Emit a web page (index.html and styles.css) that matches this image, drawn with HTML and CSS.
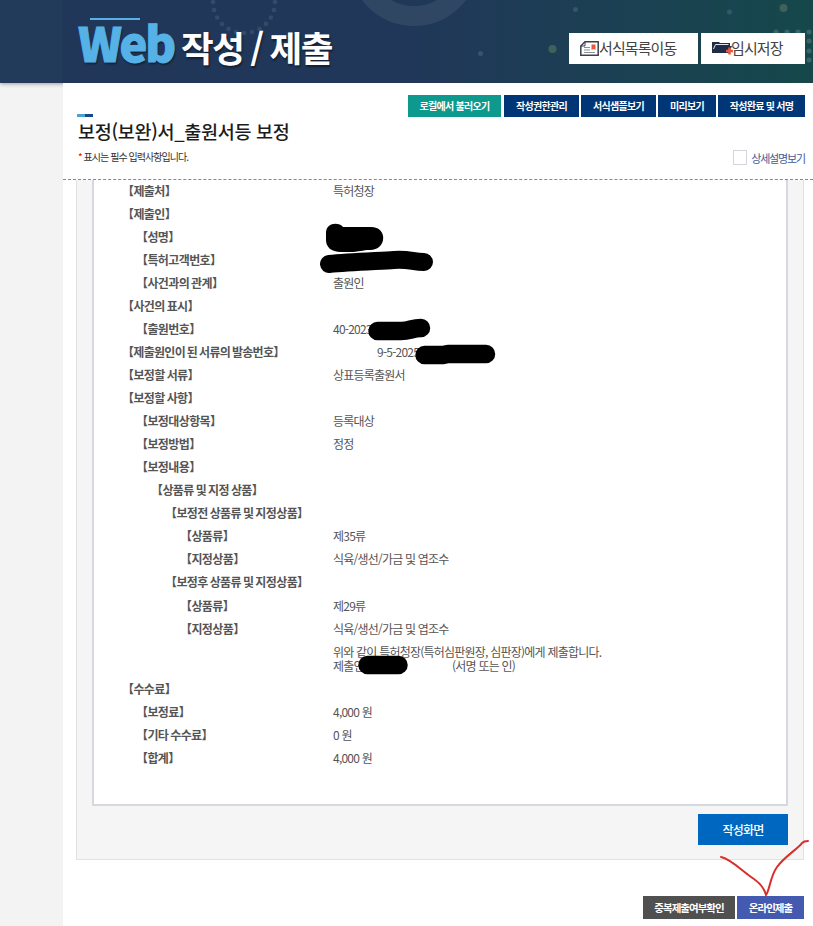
FILE: index.html
```
<!DOCTYPE html>
<html lang="ko">
	<head>
		<meta charset="utf-8">
		<title>Web 작성 / 제출</title>
		<link rel="stylesheet" href="styles.css">
	</head>
	<body>
		<header class="header">
			<svg class="header-bg" width="813" height="83" viewBox="0 0 813 83">
				<circle cx="244" cy="2" r="31" fill="none" stroke="#324b6b" stroke-width="4.6" stroke-linecap="round" stroke-dasharray="0 8.1"/>
				<circle cx="414" cy="-39" r="55" fill="none" stroke="#304763" stroke-width="20"/>
				<g fill="#31576c">
					<circle cx="575.500" cy="9.500" r="2.500"/>
					<circle cx="480.500" cy="53.500" r="2.500"/>
					<circle cx="729.500" cy="12" r="2.500"/>
				</g>
				<g fill="#3e6259">
					<circle cx="783.500" cy="8" r="4"/>
					<circle cx="552.500" cy="49" r="4"/>
				</g>
				<path d="M776 32h.1M787 32h.1M798 32h.1M809 32h.1M809 41h.1M809 51h.1M809 60h.1" stroke="#3a6468" stroke-width="5" stroke-linecap="round"/>
			</svg>
			<h1 class="logo"><span class="web">Web</span><span class="ko">작성 / 제출</span></h1>
			<div class="head-btns">
				<a class="list">
					<svg width="19" height="15" viewBox="0 0 19 15">
						<path d="M5 .8H18.200V14.200H.800V5z" fill="#fff" stroke="#3c4150" stroke-width="1.500"/>
						<path d="M.8 5H5V.8" fill="none" stroke="#3c4150"/>
						<path d="M4 6.500h6M4 9h6M4 11.500h11" stroke="#8b8f99" stroke-width="1.200"/>
						<path d="M11.500 3.500h4v5.500l-2-1-2 1z" fill="#e8593b"/>
					</svg><span>서식목록이동</span>
				</a>
				<a class="save">
					<svg width="21" height="14" viewBox="0 0 21 14">
						<path d="M0 12V1h7l1 1h10v3h2l-3 7z" fill="#1f2c47"/>
						<path d="M1.500 8l2-4.500h13" fill="none" stroke="#dfe4ec"/>
						<path d="M17.500 6.500v7M14 10h7" stroke="#e8593b" stroke-width="2.600"/>
					</svg><span>임시저장</span>
				</a>
			</div>
		</header>
		<main class="page">
			<div class="title">
				<div class="top-btns">
					<a class="load">로컬에서 불러오기</a>
					<a class="auth">작성권한관리</a>
					<a class="sample">서식샘플보기</a>
					<a class="preview">미리보기</a>
					<a class="sign">작성완료 및 서명</a>
				</div>
				<h2>보정(보완)서_출원서등 보정</h2>
				<div class="guide">
					<p><em>*</em> 표시는 필수 입력사항입니다.</p>
					<label><i></i>상세설명보기</label>
				</div>
			</div>
			<div class="panel">
				<dl class="doc">
					<div class="row"><dt>【제출처】</dt><dd>특허청장</dd></div>
					<div class="row"><dt>【제출인】</dt></div>
					<div class="row d1"><dt>【성명】</dt></div>
					<div class="row d1"><dt>【특허고객번호】</dt></div>
					<div class="row d1"><dt>【사건과의 관계】</dt><dd>출원인</dd></div>
					<div class="row"><dt>【사건의 표시】</dt></div>
					<div class="row d1"><dt>【출원번호】</dt><dd>40-2023</dd></div>
					<div class="row wide"><dt>【제출원인이 된 서류의 발송번호】</dt><dd>9-5-2025</dd></div>
					<div class="row"><dt>【보정할 서류】</dt><dd>상표등록출원서</dd></div>
					<div class="row"><dt>【보정할 사항】</dt></div>
					<div class="row d1"><dt>【보정대상항목】</dt><dd>등록대상</dd></div>
					<div class="row d1"><dt>【보정방법】</dt><dd>정정</dd></div>
					<div class="row d1"><dt>【보정내용】</dt></div>
					<div class="row d2"><dt>【상품류 및 지정 상품】</dt></div>
					<div class="row d3"><dt>【보정전 상품류 및 지정상품】</dt></div>
					<div class="row d4"><dt>【상품류】</dt><dd>제35류</dd></div>
					<div class="row d4"><dt>【지정상품】</dt><dd>식육/생선/가금 및 엽조수</dd></div>
					<div class="row d3 last"><dt>【보정후 상품류 및 지정상품】</dt></div>
					<div class="row d4"><dt>【상품류】</dt><dd>제29류</dd></div>
					<div class="row d4"><dt>【지정상품】</dt><dd>식육/생선/가금 및 엽조수</dd></div>
					<div class="row submit"><dt></dt><dd><p>위와 같이 특허청장(특허심판원장, 심판장)에게 제출합니다.</p><p class="name"><span>제출인</span><span>(서명 또는 인)</span></p></dd></div>
					<div class="row"><dt>【수수료】</dt></div>
					<div class="row d1"><dt>【보정료】</dt><dd>4,000 원</dd></div>
					<div class="row d1"><dt>【기타 수수료】</dt><dd>0 원</dd></div>
					<div class="row d1"><dt>【합계】</dt><dd>4,000 원</dd></div>
				</dl>
				<a class="write">작성화면</a>
			</div>
			<div class="bottom-btns">
				<a class="dup">중복제출여부확인</a>
				<a class="online">온라인제출</a>
			</div>
		</main>
		<!-- 가림 표시와 체크 표시 -->
		<svg class="marks" width="813" height="926" viewBox="0 0 813 926">
			<path d="M326 233C326 222 339 222 343 227H371C388 227 387 250 370 250C362 250 360 252 349 252H341C331 252 326 247 326 240Z"/>
			<g fill="none" stroke="#000" stroke-linecap="round" stroke-linejoin="round">
				<path d="M329 264C350 262 379 261 394 260S413 262 424 262" stroke-width="18"/>
				<path d="M377.500 331H401C410 331 412 328 421 328" stroke-width="18.500"/>
				<path d="M424.500 355H443L448 354H486" stroke-width="18.500"/>
				<path d="M367.500 665H398.500" stroke-width="18.500"/>
			</g>
			<path d="M721 857C731 859 742 871 754 879C761 884 765 891 766 895C770 889 770 877 777 867C785 856 799 848 802 843Q804 841 808 841" fill="none" stroke="#d72f2c" stroke-width="2" stroke-linecap="round"/>
		</svg>
	</body>
</html>
```
FILE: styles.css
```
*{margin: 0;padding: 0;box-sizing: border-box;}
body{
	height: 926px;
	overflow: hidden;
	background: #f3f3f3;
	color: #555;
	font-family: "Noto Sans CJK KR","Noto Sans",sans-serif;
	font-size: 12px;
	white-space: nowrap;
}
em,i{font-style: normal;}
a{display: flex;align-items: center;justify-content: center;}
.header{
	position: relative;
	height: 83px;
	padding: 0 8px 0 78px;
	display: flex;
	justify-content: space-between;
	background: linear-gradient(90deg,#223b5b 0,#223b5b 62px,#203759 63px,#203759 400px,#1d3e54 570px,#15484b 813px);
	box-shadow: 0 1px 4px rgba(0,0,0,.35);
}
.header-bg{
	position: absolute;
	left: 0;
	top: 0;
}
.logo{
	position: relative;
	display: flex;
	align-items: baseline;
	height: 83px;
	line-height: 83px;
	text-shadow: 1px 2px 2px rgba(0,0,0,.45);
}
.logo:before{
	content: "";
	position: absolute;
	left: 12px;
	top: 18px;
	width: 50px;
	height: 2px;
	background: #56b2e6;
}
.logo .web{
	color: #56b2e6;
	font-size: 47px;
	font-weight: 900;
	letter-spacing: -2.4px;
	-webkit-text-stroke: 1px #56b2e6;
	width: 103px;
}
.logo .ko{
	color: #fff;
	font-size: 35.5px;
	font-weight: 700;
	letter-spacing: -1.5px;
	word-spacing: -1.5px;
}
.head-btns{
	position: relative;
	display: flex;
	gap: 3px;
	padding-top: 33px;
}
.head-btns a{
	height: 31px;
	line-height: 20px;
	padding: 0 0 1px 11px;
	justify-content: flex-start;
	background: #fff;
	color: #444;
	font-size: 15px;
	letter-spacing: -.9px;
}
.head-btns .list{width: 129px;}
.head-btns .save{width: 104px;}
.head-btns .save span{margin-left: -2px;}
.page{
	position: relative;
	margin-left: 63px;
	height: 843px;
	background: #fff;
}
.title{
	height: 97px;
	padding: 12px 8px 0 15px;
	border-bottom: 1px dashed #888;
}
.top-btns{
	display: flex;
	gap: 2px;
	justify-content: flex-end;
}
.top-btns a{
	height: 22px;
	padding-bottom: 1px;
	background: #003675;
	color: #fff;
	font-size: 10px;
	font-weight: 700;
	letter-spacing: -.7px;
}
.top-btns .load{width: 93px;margin-right: 1px;background: #0e998f;}
.top-btns .auth,.top-btns .sample{width: 75px;}
.top-btns .preview{width: 58px;}
.top-btns .sign{width: 87px;}
.title h2{
	position: relative;
	height: 30px;
	line-height: 29px;
	color: #1c1c1c;
	font-size: 18.5px;
	font-weight: 500;
	letter-spacing: -.3px;
}
.title h2:before{
	content: "";
	position: absolute;
	left: -1px;
	top: -3px;
	width: 16px;
	height: 3px;
	background: linear-gradient(90deg,#4d9fd6 50%,#12498c 50%);
}
.guide{
	display: flex;
	justify-content: space-between;
	height: 21px;
	line-height: 20px;
	font-size: 10px;
	letter-spacing: -.95px;
	color: #333;
}
.guide em{color: #e00;}
.guide label{
	display: flex;
	align-items: center;
	gap: 4px;
	color: #3c5a96;
	font-size: 11px;
	letter-spacing: -1.15px;
}
.guide i{
	width: 14px;
	height: 15px;
	border: 1px solid #d2d6dc;
}
.panel{
	width: 728px;
	height: 680px;
	margin-left: 13px;
	padding: 0 15px;
	background: #f5f5f5;
	border: 1px solid #dfe1e4;
	border-top: 0;
}
.doc{
	height: 626px;
	background: #fff;
	border: 2px solid #d5d9df;
	border-top: 0;
	padding-left: 28px;
}
.row{
	display: flex;
	height: 23px;
	line-height: 22px;
	letter-spacing: -.78px;
}
.row dt{
	width: 211px;
	font-weight: 700;
	letter-spacing: -.6px;
	word-spacing: -.8px;
}
.d1 dt{padding-left: 14px;}
.d2 dt{padding-left: 29px;}
.d3 dt{padding-left: 43px;}
.d4 dt{padding-left: 58px;}
.row.wide dt{width: 255px;letter-spacing: -.7px;}
.row.last{height: 24px;}
.row.submit{height: 37px;line-height: 14px;padding-top: 4px;}
.name{display: flex;}
.name span{width: 119px;}
.write{
	width: 90px;
	height: 31px;
	margin: 8px 0 0 auto;
	padding-bottom: 1px;
	background: #0067c0;
	color: #fff;
	font-weight: 500;
	letter-spacing: -.75px;
}
.bottom-btns{
	display: flex;
	gap: 2px;
	justify-content: flex-end;
	padding: 36px 9px 0 0;
}
.bottom-btns a{
	height: 23px;
	padding-bottom: 1px;
	color: #fff;
	font-size: 10.5px;
	font-weight: 700;
	letter-spacing: -1px;
}
.bottom-btns .dup{width: 92px;background: #505050;}
.bottom-btns .online{width: 67px;background: #4459b0;}
.marks{
	position: absolute;
	left: 0;
	top: 0;
	pointer-events: none;
}
```
